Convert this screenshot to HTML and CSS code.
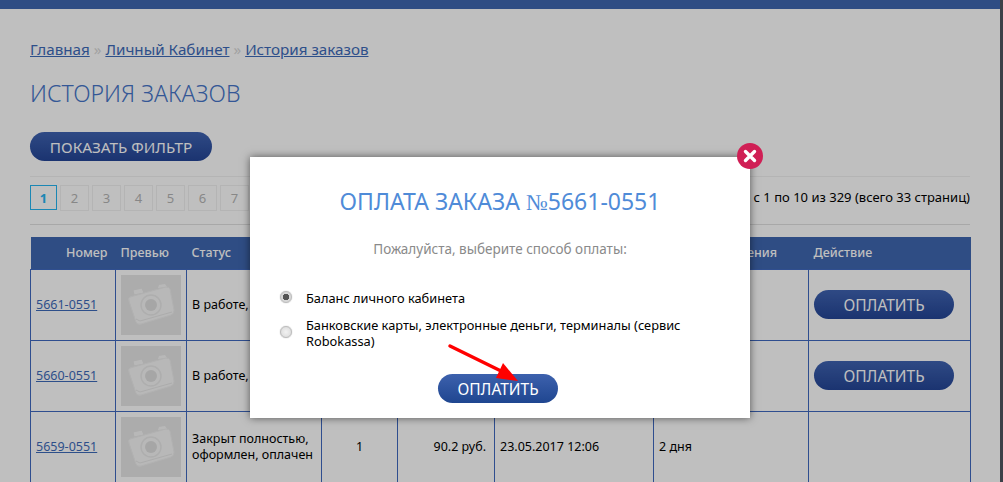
FILE: index.html
```html
<!DOCTYPE html>
<html lang="ru">
<head>
<meta charset="utf-8">
<title>История заказов</title>
<link rel="stylesheet" href="styles.css">
</head>
<body>
<div class="topbar"></div>
<main class="page">
  <nav class="crumbs"><a href="#">Главная</a> <span class="sep">»</span> <a href="#">Личный Кабинет</a> <span class="sep">»</span> <a href="#">История заказов</a></nav>
  <h1 class="heading">ИСТОРИЯ ЗАКАЗОВ</h1>
  <button class="pill filter">ПОКАЗАТЬ ФИЛЬТР</button>
  <div class="pager">
    <div class="pages">
      <span class="pg active">1</span><span class="pg">2</span><span class="pg">3</span><span class="pg">4</span><span class="pg">5</span><span class="pg">6</span><span class="pg">7</span>
    </div>
    <div class="count">Показано с 1 по 10 из 329 (всего 33 страниц)</div>
  </div>
  <table class="orders">
    <colgroup><col class="c1"><col class="c2"><col class="c3"><col class="c4"><col class="c5"><col class="c6"><col class="c7"><col class="c8"></colgroup>
    <thead>
      <tr><th class="r">Номер</th><th>Превью</th><th>Статус</th><th>Кол-во</th><th>Сумма</th><th>Дата</th><th>Срок изготовления</th><th>Действие</th></tr>
    </thead>
    <tbody>
      <tr>
        <td><a href="#">5661-0551</a></td>
        <td><svg class="thumb" viewBox="0 0 60 60"><use href="#cam"/></svg></td>
        <td>В работе,</td><td class="ctr">1</td><td class="r">90.2 руб.</td><td>23.05.2017 12:20</td><td>2 дня</td>
        <td><button class="pill pay">ОПЛАТИТЬ</button></td>
      </tr>
      <tr>
        <td><a href="#">5660-0551</a></td>
        <td><svg class="thumb" viewBox="0 0 60 60"><use href="#cam"/></svg></td>
        <td>В работе,</td><td class="ctr">1</td><td class="r">90.2 руб.</td><td>23.05.2017 12:10</td><td>2 дня</td>
        <td><button class="pill pay">ОПЛАТИТЬ</button></td>
      </tr>
      <tr>
        <td><a href="#">5659-0551</a></td>
        <td><svg class="thumb" viewBox="0 0 60 60"><use href="#cam"/></svg></td>
        <td>Закрыт полностью, оформлен, оплачен</td><td class="ctr">1</td><td class="r">90.2 руб.</td><td>23.05.2017 12:06</td><td>2 дня</td>
        <td></td>
      </tr>
    </tbody>
  </table>
</main>
<div class="veil"></div>
<div class="edge"></div>
<section class="modal">
  <button class="close" aria-label="Закрыть"><svg viewBox="0 0 26 26" width="26" height="26"><path d="M8.500 8.500l9 9M17.500 8.500l-9 9" stroke="#fff" stroke-width="3.400" stroke-linecap="round" fill="none"/></svg></button>
  <h2 class="mtitle">ОПЛАТА ЗАКАЗА <span class="numero">№</span>5661-0551</h2>
  <p class="msub">Пожалуйста, выберите способ оплаты:</p>
  <label class="opt"><span class="radio on"></span><span>Баланс личного кабинета</span></label>
  <label class="opt"><span class="radio"></span><span>Банковские карты, электронные деньги, терминалы (сервис Robokassa)</span></label>
  <div class="mfoot"><button class="pill go">ОПЛАТИТЬ</button></div>
</section>
<svg class="arrow" viewBox="0 0 90 50" width="90" height="50"><path d="M5 6L58 32" stroke="#f00" stroke-width="3.500" stroke-linecap="round"/><path d="M58 23L73 41L51 38Z" fill="#f00"/></svg>
<svg class="defs" width="0" height="0"><defs><g id="cam">
<rect width="60" height="60" fill="#e6e6e6"/>
<path d="M37 13L38 10L44 9L46 12Z" fill="#f6f6f6"/>
<path d="M13 20L12 15L21 13L23 18Z" fill="#f6f6f6" stroke="#e6e6e6"/>
<path d="M9 22L45 12Q48 12 49 14L53 35Q53 39 50 40L20 49Q16 50 15 47L8 26Q7 23 9 22Z" fill="#f6f6f6" stroke="#ededed"/>
<path d="M15 44L19 46L51 37" fill="none" stroke="#e6e6e6"/>
<circle cx="30" cy="30" r="10" fill="#f6f6f6" stroke="#e8e8e8" stroke-width="1.500"/>
<circle cx="30" cy="30" r="6" fill="#dedede"/>
</g></defs></svg>
</body>
</html>
```
FILE: styles.css
```css
* { box-sizing: border-box; }
html, body { margin: 0; height: 482px; overflow: hidden; }
body { background: #fff; font-family: "Noto Sans", "Open Sans", sans-serif; color: #000; position: relative; }
.topbar { height: 9px; background: #3f67b1; }
.page { padding: 31px 33px 0 30px; width: 1003px; }
a { color: #3d6ab8; }
.crumbs { font-size: 15.200px; line-height: 18px; }
.sep { color: #d8d8d8; }
.heading { margin: 20px 0 0; font-weight: 300; font-size: 23px; line-height: 30px; color: #4675c8; }
.pill { border: 0; border-radius: 15px; background: linear-gradient(#3f63b1, #244596); color: #fff; font-family: inherit; font-size: 15.300px; padding: 0; height: 29px; }
.filter { display: block; margin-top: 24px; width: 182px; }
.pager { display: flex; justify-content: space-between; align-items: flex-start; margin-top: 15px; height: 49px; padding-top: 8px; border-top: 1px solid #f0f0f0; border-bottom: 1px solid #e0e0e0; }
.pages { display: flex; gap: 3px; }
.pg { width: 29px; height: 26px; border: 1px solid #f0f0f0; display: flex; align-items: center; justify-content: center; font-size: 13px; color: #b5b5b5; }
.pg.active { width: 27px; height: 25px; border-color: #24b4f1; color: #24b4f1; font-weight: 700; }
.count { font-size: 13px; line-height: 24px; }
.orders { margin-top: 12px; width: 940px; border-collapse: collapse; table-layout: fixed; font-size: 12.500px; line-height: 16px; }
.c1 { width: 85px; } .c2 { width: 71px; } .c3 { width: 135px; } .c4 { width: 76px; } .c5 { width: 97px; } .c6 { width: 159px; } .c7 { width: 155px; } .c8 { width: 162px; }
.orders th { background: #3f67b1; color: #fff; font-weight: 500; height: 32px; padding: 0 5px; text-align: left; }
.orders th.r { text-align: right; padding-right: 8px; }
.orders td { border: 1px solid #3f69bf; height: 71px; padding: 0 5px; }
.orders td.r { text-align: right; padding-right: 8px; }
.orders td.ctr { text-align: center; }
.thumb { display: block; width: 60px; height: 60px; }
.pay { display: block; width: 140px; font-size: 15.500px; }
.edge { position: absolute; top: 0; right: 0; width: 3px; height: 482px; background: #3c4048; }
.veil { position: absolute; inset: 0; background: rgba(0,0,0,.25); }
.modal { position: absolute; left: 250px; top: 157px; width: 500px; height: 261px; background: #fff; box-shadow: 0 0 8px rgba(0,0,0,.55); padding: 30px 30px 0; }
.close { position: absolute; right: -13px; top: -14px; width: 26px; height: 26px; padding: 0; border: 0; border-radius: 50%; background: #d01f55; }
.close svg { display: block; }
.mtitle { margin: 0; text-align: center; font-weight: 400; font-size: 23px; line-height: 28px; color: #4f8bd8; }
.numero { font-family: "Liberation Serif", serif; }
.msub { margin: 23px 0 32px; text-align: center; font-size: 13.500px; line-height: 18px; color: #8a8a8a; }
.opt { display: flex; align-items: center; gap: 14px; font-size: 12.800px; line-height: 16px; margin-bottom: 11px; }
.radio { flex: none; width: 12px; height: 12px; margin-top: -3px; border-radius: 50%; border: 1px solid #bbb; background: radial-gradient(#f2f2f2, #d8d8d8); box-shadow: 0 0 1px #999; }
.radio.on { background: radial-gradient(#555 0 3px, #d8d8d8 3.500px); }
.mfoot { display: flex; justify-content: center; margin-top: 25px; padding-right: 4px; }
.go { width: 120px; background: linear-gradient(#3d61ad, #1f4690); font-size: 15.500px; }
.arrow { position: absolute; left: 445px; top: 340px; }
.defs { position: absolute; }
```
